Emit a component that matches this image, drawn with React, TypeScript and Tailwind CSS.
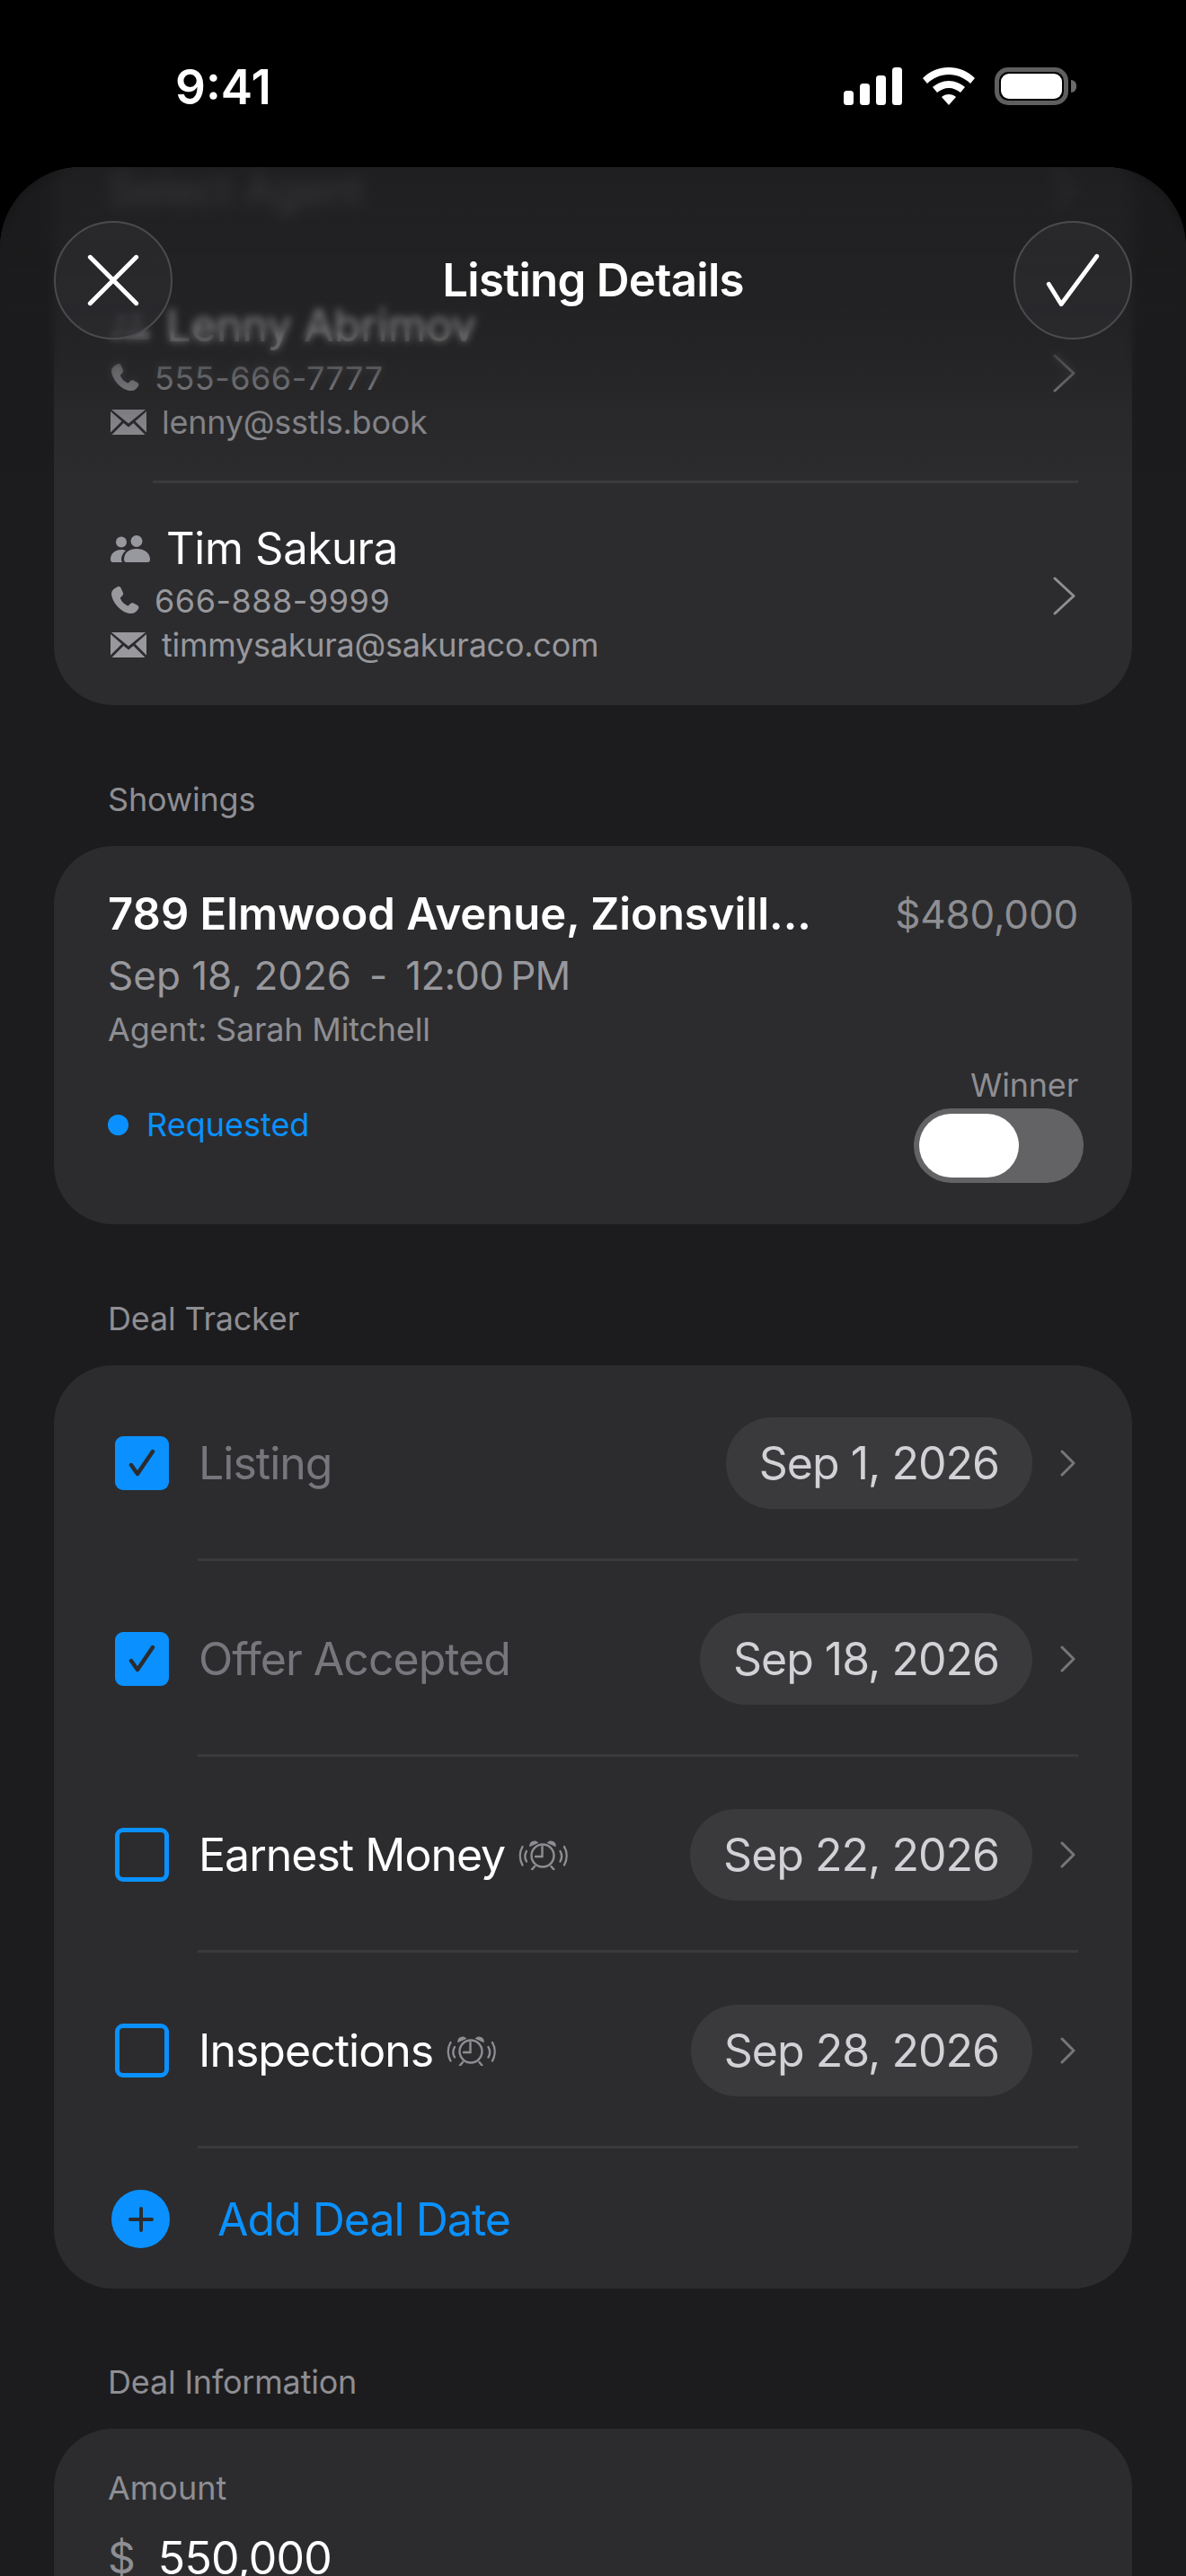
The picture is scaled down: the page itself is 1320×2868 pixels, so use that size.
const font = { fontFamily: 'Inter, "Noto Sans", sans-serif' };

function People({ className }: { className?: string }) {
  return (
    <svg viewBox="0 0 44 30" className={className} fill="currentColor">
      <circle cx="12" cy="7.5" r="6" />
      <circle cx="29" cy="6.5" r="6.5" />
      <path d="M0 27c0-7 5-11 12-11 2 0 3.500.3 5 1-3 2.500-5 6-5 10 0 1 .3 2 1 3H3c-2 0-3-1-3-3z" />
      <path d="M15 27c0-8 6-12 14-12s15 4 15 12c0 2-1 3-3 3H18c-2 0-3-1-3-3z" />
    </svg>
  );
}

function Phone({ className }: { className?: string }) {
  return (
    <svg viewBox="0 0 30 30" className={className} fill="currentColor">
      <path d="M7 .5c1.500-.8 3-.4 3.800 1l2.200 4.800c.6 1.300.3 2.500-.7 3.400l-1.600 1.500c-.5.500-.5 1-.2 1.700 1.500 3.200 3.700 5.500 7 7 .6.300 1.100.2 1.600-.3l1.500-1.600c1-1 2.200-1.200 3.400-.6l3.800 2c1.500.8 2 2.300 1.200 3.800-1.400 2.800-4 5-7.300 5C12 28.500 1 16 1 7.500 1 4.500 3.500 2 7 .5z" />
    </svg>
  );
}

function Envelope({ className }: { className?: string }) {
  return (
    <svg viewBox="0 0 40 28" className={className} fill="currentColor">
      <path d="M1 0h38L20 15.500z" />
      <path d="M0 2l12.500 11L0 25.500z" />
      <path d="M40 2L27.500 13 40 25.500z" />
      <path d="M1.500 28L14.500 15l5.500 4.500 5.500-4.500 13 13z" />
    </svg>
  );
}

function Chevron({ className }: { className?: string }) {
  return (
    <svg viewBox="0 0 25 43" className={className} fill="none" stroke="currentColor" strokeWidth="3" strokeLinecap="round" strokeLinejoin="round">
      <path d="M2 2l21 19.500L2 41" />
    </svg>
  );
}

function Alarm() {
  return (
    <svg viewBox="0 0 58 34" className="ml-[14px] w-[58px] h-[34px] text-[#8e8e93]" fill="none" stroke="currentColor" strokeWidth="2.400" strokeLinecap="round">
      <circle cx="28" cy="18" r="12.500" />
      <path d="M27.500 8v11H20" />
      <path d="M19 30l-3 3.500M37.500 30l3 3.500" />
      <path d="M14 7c0-4 5-6 8-3.500zM42 7c0-4-5-6-8-3.500z" fill="currentColor" strokeWidth="1.500" />
      <path d="M5.500 8c-3.500 6-3.500 14 0 20.500M10 13c-2 3.500-2 8 0 11.500M52 8c3.500 6 3.500 14 0 20.500M47.500 13c2 3.500 2 8 0 11.500" />
    </svg>
  );
}

function StatusBar() {
  return (
    <div className="h-[186px] bg-black flex items-start justify-between pl-[195px] pr-[122px] pt-[68px]">
      <span className="text-[53px] leading-[58px] font-semibold text-white">9:41</span>
      <div className="flex items-center gap-[22px] pt-[7px]">
        <svg viewBox="0 0 66 42" className="w-[66px] h-[42px]" fill="#fff">
          <rect x="0" y="26" width="11" height="16" rx="3.500" />
          <rect x="18" y="18" width="11" height="24" rx="3.500" />
          <rect x="36" y="9" width="11" height="33" rx="3.500" />
          <rect x="54" y="0" width="11" height="42" rx="3.500" />
        </svg>
        <svg viewBox="0 0 58 42" className="w-[58px] h-[42px]" fill="#fff">
          <path d="M29 0c11 0 21 4 29 12l-5 6C47 12 38 8 29 8S11 12 5 18L0 12C8 4 18 0 29 0z" />
          <path d="M29 15c7 0 13 3 18 7l-5 6c-4-3-8-5-13-5s-9 2-13 5l-5-6c5-4 11-7 18-7z" />
          <path d="M29 30c3 0 6 1 8 3l-8 9-8-9c2-2 5-3 8-3z" />
        </svg>
        <div className="flex items-center gap-[3px]">
          <div className="w-[82px] h-[42px] rounded-[15px] border-[5px] border-[#5f5f61] p-[2px]">
            <div className="w-full h-full rounded-[9px] bg-white" />
          </div>
          <div className="w-[6px] h-[14px] rounded-r-full bg-[#6b6b6d]" />
        </div>
      </div>
    </div>
  );
}

function SectionLabel({ children }: { children: string }) {
  return <div className="pl-[120px] text-[36px] leading-[44px] tracking-[-0.2px] text-[#8e8e93]">{children}</div>;
}

function Contact({ name, phone, email }: { name: string; phone: string; email: string }) {
  return (
    <div className="h-[245px] pl-[63px] pr-[63px] pt-[5px] flex items-center justify-between">
      <div className="pb-[2px]">
        <div className="flex items-center text-white">
          <People className="w-[44px] h-[30px] text-[#98989f] mr-[18px]" />
          <span className="text-[49px] leading-[58px] tracking-[-0.3px]">{name}</span>
        </div>
        <div className="flex items-center text-[#98989d] mt-[4px]">
          <Phone className="w-[32px] h-[32px] mr-[17px]" />
          <span className="text-[36px] leading-[50px] tracking-[0.5px]">{phone}</span>
        </div>
        <div className="flex items-center text-[#98989d]">
          <Envelope className="w-[40px] h-[28px] mr-[17px]" />
          <span className="text-[36px] leading-[48px] tracking-[-0.25px]">{email}</span>
        </div>
      </div>
      <Chevron className="w-[25px] h-[43px] text-[#8e8e93]" />
    </div>
  );
}

function Divider({ left }: { left: string }) {
  return <div className={`h-[3px] bg-[#3a3a3c] ${left} mr-[60px]`} />;
}

function TrackerRow({ label, date, done, alarm }: { label: string; date: string; done?: boolean; alarm?: boolean }) {
  return (
    <div className="h-[215px] pl-[68px] pr-[63px] pt-[3px] flex items-center">
      {done ? (
        <div className="w-[60px] h-[60px] rounded-[9px] bg-[#0a91ff] flex items-center justify-center">
          <svg viewBox="0 0 32 32" className="w-[32px] h-[32px]" fill="none" stroke="#2c2c2e" strokeWidth="4.500" strokeLinecap="round" strokeLinejoin="round">
            <path d="M4 18l7 10L28 3" />
          </svg>
        </div>
      ) : (
        <div className="w-[60px] h-[60px] rounded-[9px] border-[5px] border-[#0a91ff]" />
      )}
      <span className={`ml-[33px] text-[50px] leading-[60px] tracking-[-1px] ${done ? 'text-[#76767c]' : 'text-white'}`}>{label}</span>
      {alarm && <Alarm />}
      <div className="ml-auto h-[102px] px-[37px] rounded-full bg-[#3a3a3c] flex items-center text-[50px] tracking-[-1px] text-[#d1d1d6]">{date}</div>
      <svg viewBox="0 0 17 30" className="ml-[31px] w-[17px] h-[30px] text-[#76767a]" fill="none" stroke="currentColor" strokeWidth="3" strokeLinecap="round" strokeLinejoin="round">
        <path d="M2 2l13 13L2 28" />
      </svg>
    </div>
  );
}

function HeaderButton({ children }: { children: React.ReactNode }) {
  return (
    <div className="w-[132px] h-[132px] rounded-full border-2 border-[#4b4b4f] bg-[#2c2c2f]/70 flex items-center justify-center">
      {children}
    </div>
  );
}

export default function App() {
  return (
    <div className="w-[1320px] h-[2868px] overflow-hidden bg-black" style={font}>
      <StatusBar />
      <div className="relative h-[2682px] overflow-hidden rounded-t-[90px] bg-[#1c1c1e]">
        <div className="mx-[60px] -mt-[56px] h-[655px] overflow-hidden rounded-[66px] bg-[#2c2c2e]">
          <div className="h-[157px] pl-[60px] pr-[63px] flex items-center justify-between pt-[4px] text-[#8e8e93]">
            <span className="text-[48px] tracking-[-0.5px]">Select Agent</span>
            <Chevron className="w-[25px] h-[43px]" />
          </div>
          <Divider left="ml-[110px]" />
          <Contact name="Lenny Abrimov" phone="555-666-7777" email="lenny@sstls.book" />
          <Divider left="ml-[110px]" />
          <Contact name="Tim Sakura" phone="666-888-9999" email="timmysakura@sakuraco.com" />
        </div>

        <div className="mt-[83px]">
          <SectionLabel>Showings</SectionLabel>
        </div>
        <div className="mt-[30px] mx-[60px] h-[421px] rounded-[66px] bg-[#2c2c2e] pl-[60px] pr-[60px] pt-[46px]">
          <div className="flex items-center justify-between h-[60px]">
            <span className="text-[49px] font-semibold text-white">789 Elmwood Avenue, Zionsvill...</span>
            <span className="text-[44px] tracking-[-0.2px] text-[#8e8e93]">$480,000</span>
          </div>
          <div className="mt-[8px] flex text-[44px] leading-[60px] text-[#98989d]">
            <span>Sep 18, 2026</span>
            <span className="ml-[20px]">-</span>
            <span className="ml-[20px] tracking-[-0.8px]">12:00</span>
            <span className="ml-[8px] tracking-[-0.8px]">PM</span>
          </div>
          <div className="mt-[8px] text-[36px] leading-[44px] tracking-[-0.2px] text-[#8e8e93]">Agent: Sarah Mitchell</div>
          <div className="mt-[18px] flex items-end justify-between">
            <div className="flex items-center pb-[43px]">
              <div className="w-[23px] h-[23px] rounded-full bg-[#0a91ff]" />
              <span className="ml-[20px] text-[36px] leading-[44px] text-[#0a91ff]">Requested</span>
            </div>
            <div className="flex flex-col items-end">
              <span className="text-[36px] leading-[44px] tracking-[-0.2px] text-[#8e8e93]">Winner</span>
              <div className="mt-[4px] -mr-[6px] w-[189px] h-[83px] rounded-full bg-[#636366] p-[6px]">
                <div className="w-[111px] h-[71px] rounded-full bg-white" />
              </div>
            </div>
          </div>
        </div>

        <div className="mt-[83px]">
          <SectionLabel>Deal Tracker</SectionLabel>
        </div>
        <div className="mt-[30px] mx-[60px] h-[1028px] rounded-[66px] bg-[#2c2c2e]">
          <TrackerRow label="Listing" date="Sep 1, 2026" done />
          <Divider left="ml-[160px]" />
          <TrackerRow label="Offer Accepted" date="Sep 18, 2026" done />
          <Divider left="ml-[160px]" />
          <TrackerRow label="Earnest Money" date="Sep 22, 2026" alarm />
          <Divider left="ml-[160px]" />
          <TrackerRow label="Inspections" date="Sep 28, 2026" alarm />
          <Divider left="ml-[160px]" />
          <div className="h-[157px] pl-[64px] flex items-center">
            <div className="w-[65px] h-[65px] rounded-full bg-[#0a91ff] flex items-center justify-center">
              <svg viewBox="0 0 30 30" className="w-[30px] h-[30px]" fill="none" stroke="#2c2c2e" strokeWidth="4" strokeLinecap="round">
                <path d="M15 3v24M3 15h24" />
              </svg>
            </div>
            <span className="ml-[53px] text-[50px] leading-[60px] tracking-[-1px] text-[#0a91ff]">Add Deal Date</span>
          </div>
        </div>

        <div className="mt-[82px]">
          <SectionLabel>Deal Information</SectionLabel>
        </div>
        <div className="mt-[30px] mx-[60px] h-[240px] rounded-[66px] bg-[#2c2c2e] pl-[60px] pt-[44px]">
          <div className="text-[36px] leading-[44px] text-[#8e8e93]">Amount</div>
          <div className="mt-[26px] flex items-center">
            <span className="text-[48px] leading-[60px] text-[#8e8e93]">$</span>
            <span className="ml-[25px] text-[50px] leading-[60px] tracking-[-0.8px] text-white">550,000</span>
          </div>
        </div>

        {/* blurred header on top of the scrolled content */}
        <div className="absolute inset-x-0 top-0 h-[250px] backdrop-blur-[4px] [mask-image:linear-gradient(to_bottom,black_72%,transparent)]" />
        <div className="absolute inset-x-0 top-0 h-[120px] backdrop-blur-[7px] [mask-image:linear-gradient(to_bottom,black_70%,transparent)]" />
        <div className="absolute inset-x-0 top-0 h-[340px] bg-gradient-to-b from-[#1c1c1e]/80 via-[#1c1c1e]/55 to-transparent" />
        <div className="absolute inset-x-[60px] top-[60px] flex items-center justify-between">
          <HeaderButton>
            <svg viewBox="0 0 52 52" className="w-[58px] h-[58px]" fill="none" stroke="#fff" strokeWidth="4.500" strokeLinecap="round">
              <path d="M3 3l46 46M49 3L3 49" />
            </svg>
          </HeaderButton>
          <span className="text-[51px] tracking-[-0.75px] font-semibold text-white">Listing Details</span>
          <HeaderButton>
            <svg viewBox="0 0 56 56" className="w-[60px] h-[60px]" fill="none" stroke="#fff" strokeWidth="4.500" strokeLinecap="round" strokeLinejoin="round">
              <path d="M3 32l13 21L53 3" />
            </svg>
          </HeaderButton>
        </div>
      </div>
    </div>
  );
}
